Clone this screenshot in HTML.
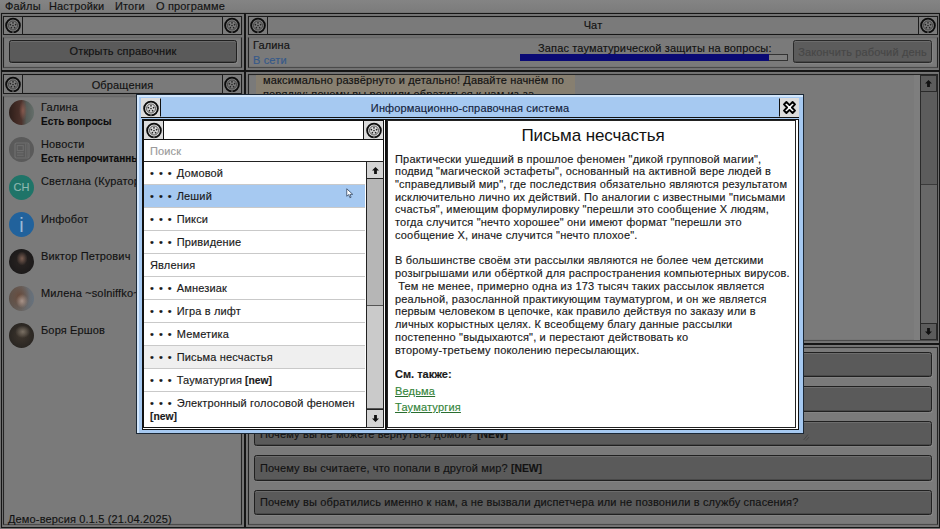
<!DOCTYPE html>
<html lang="ru">
<head>
<meta charset="utf-8">
<title>Информационно-справочная система</title>
<style>
*{box-sizing:border-box;margin:0;padding:0}
html,body{width:940px;height:529px;overflow:hidden}
body{background:#7a7a7a;font-family:"Liberation Sans",sans-serif;font-size:11px;letter-spacing:0.15px;color:#121212;position:relative;-webkit-text-stroke:0.15px}
.abs{position:absolute}
.t{position:absolute;white-space:nowrap;line-height:14px}
.box{position:absolute;border:1px solid #161616;box-shadow:0 0 1px rgba(0,0,0,.4),inset 0 0 1px rgba(0,0,0,.4)}
.ico{position:absolute;width:20px;height:19px;border:1px solid #1c1c1c;background:#7c7c7c}
.ico svg{position:absolute;left:0;top:0;width:18px;height:17px}
.lt{border-color:#6a6a6a #242424 #4a4a4a #242424}
.btn{position:absolute;background:#5a5a5a;border:1px solid #202020;border-radius:2.5px;box-shadow:inset 0 1px 0 #6c6c6c,inset 0 -1px 0 #484848,1px 1px 0 #848484}
.menu{position:absolute;left:0;top:0;width:940px;height:13px;background:linear-gradient(#848484,#7b7b7b)}
.menu span{position:absolute;top:-1px;line-height:14px;white-space:nowrap}
.av{position:absolute;left:9px;width:25px;height:25px;border-radius:50%;overflow:hidden}
.nm{position:absolute;left:41px;white-space:nowrap;line-height:14px}
.st{position:absolute;left:41px;white-space:nowrap;line-height:14px;font-weight:bold;color:#0c0c0c;transform:scaleX(.91);transform-origin:0 0;letter-spacing:0}
b{display:inline-block;transform:scaleX(.94);transform-origin:0 50%;letter-spacing:0}
/* modal */
#modal{position:absolute;left:136px;top:94px;width:668px;height:340px;background:#a6c9f1;border:1px solid #1b2836;box-shadow:inset 2px 2px 0 #d2e6fb}
#modal .ico{background:#dcdcdc;border-color:#111}
.row{position:absolute;left:0;width:221px;height:23px;border-bottom:1px solid #c9c9c9;line-height:22px;padding-left:6px;white-space:nowrap;color:#1a1a1a}
.row i{font-style:normal;word-spacing:0.9px;letter-spacing:0.55px}
.art{position:absolute;white-space:nowrap;font-size:11px;line-height:13px;color:#1a1a1a;letter-spacing:0.19px}
.art a{color:#34853a;text-decoration:underline;text-decoration-color:#2a6e30}
</style>
</head>
<body>
<!-- menu -->
<div class="menu">
<span style="left:5px">Файлы</span>
<span style="left:49px">Настройки</span>
<span style="left:115px">Итоги</span>
<span style="left:156px">О программе</span>
</div>

<!-- top-left panel -->
<div class="box" style="left:1px;top:13px;width:244px;height:58px"></div>
<div class="box" style="left:3px;top:16px;width:239px;height:19px"></div>
<div class="ico" style="left:3px;top:16px"><svg viewBox="0 0 18 17"><use href="#reel"/></svg></div>
<div class="ico" style="left:222px;top:16px"><svg viewBox="0 0 18 17"><use href="#reel"/></svg></div>
<div class="box lt" style="left:3px;top:37px;width:239px;height:31px"></div>
<div class="btn" style="left:9px;top:40px;width:228px;height:23px"></div>
<div class="t" style="left:9px;top:44px;width:228px;text-align:center">Открыть справочник</div>

<!-- contacts panel -->
<div class="box" style="left:1px;top:71px;width:244px;height:457px"></div>
<div class="box" style="left:3px;top:74px;width:239px;height:20px"></div>
<div class="ico" style="left:3px;top:74px;height:20px"><svg viewBox="0 0 18 17" style="top:0.5px"><use href="#reel"/></svg></div>
<div class="ico" style="left:222px;top:74px;height:20px"><svg viewBox="0 0 18 17" style="top:0.5px"><use href="#reel"/></svg></div>
<div class="t" style="left:3px;top:78px;width:239px;text-align:center">Обращения</div>
<div class="box lt" style="left:3px;top:96px;width:239px;height:429px"></div>

<div class="av" style="top:100px;background:radial-gradient(ellipse 16% 40% at 56% 42%,#86594e 0,rgba(134,89,78,0) 100%),linear-gradient(90deg,#2c1e1a 0%,#402923 28%,#4c322c 50%,#565c58 70%,#646e6a 100%)"></div>
<div class="nm" style="top:100px">Галина</div>
<div class="st" style="top:114px">Есть вопросы</div>

<div class="av" style="top:137px;background:#5a5a5a"></div>
<svg class="abs" style="left:14px;top:142px" width="16" height="17" viewBox="0 0 16 17"><g fill="none" stroke="#6f6f6f"><rect x="1" y="1" width="14" height="15" rx="1.5" stroke-width="1.2"/><path d="M11.6 1.5v14M13.2 2v13" stroke-width="0.8"/><rect x="3.2" y="3.6" width="6" height="5" stroke-width="1"/><path d="M3 10.8h6.6M3 13.2h6.6" stroke-width="1"/></g></svg>
<div class="nm" style="top:137px">Новости</div>
<div class="st" style="top:151px">Есть непрочитанные</div>

<div class="av" style="top:175px;background:#1f7468"></div>
<div class="t" style="left:9px;top:180px;width:25px;text-align:center;color:#8fb8b0;">СН</div>
<div class="nm" style="top:174px">Светлана (Куратор)</div>

<div class="av" style="top:212px;background:#21629c"></div>
<div class="t" style="left:9px;top:213px;width:25px;text-align:center;color:#9cbad6;font-size:20px;line-height:24px;-webkit-text-stroke:0">i</div>
<div class="nm" style="top:212px">Инфобот</div>

<div class="av" style="top:249px;background:radial-gradient(ellipse 22% 28% at 52% 38%,#7a5e52 0,rgba(122,94,82,0) 100%),radial-gradient(circle at 50% 50%,#2a2422 0,#1c1a1a 70%,#242020 100%)"></div>
<div class="nm" style="top:249px">Виктор Петрович</div>

<div class="av" style="top:286px;background:radial-gradient(ellipse 24% 28% at 52% 60%,#a8948a 0,rgba(168,148,138,0) 100%),radial-gradient(ellipse 42% 55% at 42% 42%,#66493a 0,rgba(102,73,58,0) 100%),linear-gradient(90deg,#5c5048 0,#6a6664 55%,#66727e 100%)"></div>
<div class="nm" style="top:286px">Милена ~solniffko~</div>

<div class="av" style="top:323px;background:radial-gradient(ellipse 30% 25% at 55% 35%,#7a7064 0,rgba(122,112,100,0) 100%),radial-gradient(circle at 50% 50%,#3e362e 0,#2a2622 70%,#34302c 100%)"></div>
<div class="nm" style="top:323px">Боря Ершов</div>

<div class="t" style="left:8px;top:512px;">Демо-версия 0.1.5 (21.04.2025)</div>

<!-- chat panel -->
<div class="box" style="left:245px;top:13px;width:695px;height:58px"></div>
<div class="box" style="left:248px;top:16px;width:690px;height:19px"></div>
<div class="ico" style="left:248px;top:16px"><svg viewBox="0 0 18 17"><use href="#reel"/></svg></div>
<div class="ico" style="left:918px;top:16px"><svg viewBox="0 0 18 17"><use href="#reel"/></svg></div>
<div class="t" style="left:248px;top:18px;width:690px;text-align:center">Чат</div>
<div class="box lt" style="left:248px;top:37px;width:690px;height:31px"></div>
<div class="t" style="left:253px;top:38px">Галина</div>
<div class="t" style="left:253px;top:53px;color:#35598a">В сети</div>
<div class="t" style="left:538px;top:41px;">Запас тауматурической защиты на вопросы:</div>
<div class="abs" style="left:520px;top:54px;width:268px;height:7px;border:1px solid #333;background:#808080"></div>
<div class="abs" style="left:520px;top:54px;width:249px;height:7px;background:#0a0a74"></div>
<div class="btn" style="left:793px;top:40px;width:139px;height:23px;background:#5c5c5c;border-color:#2a2a2a"></div>
<div class="t" style="left:794px;top:45px;width:137px;text-align:center;color:#474747">Закончить рабочий день</div>

<!-- chat area -->
<div class="box" style="left:245px;top:71px;width:695px;height:273px"></div>
<div class="box lt" style="left:248px;top:74px;width:690px;height:267px;border-top-color:#242424"></div>
<div class="abs" style="left:256px;top:75px;width:319px;height:20px;background:#877f70"></div>
<div class="t" style="left:263px;top:73px;">максимально развёрнуто и детально! Давайте начнём по</div>
<div class="t" style="left:263px;top:87px;">порядку: почему вы решили обратиться к нам из-за</div>
<!-- chat scrollbar -->
<div class="abs" style="left:914px;top:75px;width:6px;height:265px;background:#7e7e7e"></div>
<div class="abs" style="left:920px;top:75px;width:17px;height:265px;background:#5c5c5c;border-left:1px solid #2a2a2a"></div>
<div class="abs" style="left:921px;top:184px;width:16px;height:139px;background:#686868;border-top:1px solid #3a3a3a"></div>
<div class="abs" style="left:920px;top:75px;width:17px;height:17px;background:#5c5c5c;border:1px solid #2a2a2a"></div>
<svg class="abs" style="left:925px;top:80px" width="7" height="7" viewBox="0 0 9 9"><path d="M4.5 0L9 4.5H6.3V9H2.7V4.5H0z" fill="#111"/></svg>
<div class="abs" style="left:920px;top:323px;width:17px;height:17px;background:#5c5c5c;border:1px solid #2a2a2a"></div>
<svg class="abs" style="left:925px;top:328px" width="7" height="7" viewBox="0 0 9 9"><path d="M4.5 9L9 4.5H6.3V0H2.7V4.5H0z" fill="#111"/></svg>

<!-- questions panel -->
<div class="box" style="left:245px;top:344px;width:695px;height:184px"></div>
<div class="box lt" style="left:248px;top:347px;width:690px;height:178px;border-top-color:#2c2c2c"></div>
<div class="btn" style="left:254px;top:352px;width:678px;height:25px"></div>
<div class="btn" style="left:254px;top:386px;width:678px;height:26px"></div>
<div class="btn" style="left:254px;top:421px;width:678px;height:25px"></div>
<div class="t" style="left:260px;top:427px">Почему вы не можете вернуться домой? <b>[NEW]</b></div>
<div class="btn" style="left:254px;top:455px;width:678px;height:26px"></div>
<div class="t" style="left:260px;top:461px">Почему вы считаете, что попали в другой мир? <b>[NEW]</b></div>
<div class="btn" style="left:254px;top:490px;width:678px;height:25px"></div>
<div class="t" style="left:260px;top:495px">Почему вы обратились именно к нам, а не вызвали диспетчера или не позвонили в службу спасения?</div>

<!-- modal -->
<div id="modal">
  <div class="ico" style="left:4px;top:3px;height:19px;border-color:transparent #111 transparent transparent"><svg viewBox="0 0 18 17" style="top:0.5px"><use href="#reel"/></svg></div>
  <div class="t" style="left:0;top:6px;width:666px;text-align:center;color:#14233c">Информационно-справочная система</div>
  <div class="ico" style="left:642px;top:3px;width:20px;height:19px;border-color:transparent transparent transparent #111"></div>
  <svg class="abs" style="left:644px;top:4px" width="17" height="17" viewBox="0 0 17 17"><path d="M3 5.4L5.4 3L8.5 6.1L11.6 3L14 5.4L10.9 8.5L14 11.6L11.6 14L8.5 10.9L5.4 14L3 11.6L6.1 8.5Z" fill="#fff" stroke="#000" stroke-width="1.9" stroke-linejoin="round"/></svg>
  <div class="abs" style="left:4px;top:22px;width:658px;height:1px;background:#111"></div>

  <!-- left inner panel -->
  <div class="abs" style="left:5px;top:24px;width:244px;height:311px;background:#fff;border:1px solid #111"></div>
  <div class="abs" style="left:6px;top:25px;width:241px;height:308px;border:1px solid #111"></div>
  <div class="abs" style="left:6px;top:25px;width:241px;height:20px;border:1px solid #111;background:#fff"></div>
  <div class="ico" style="left:6px;top:25px;width:21px;height:20px"><svg viewBox="0 0 18 17" style="left:0.5px;top:0.5px"><use href="#reel"/></svg></div>
  <div class="ico" style="left:226px;top:25px;width:21px;height:20px"><svg viewBox="0 0 18 17" style="left:0.5px;top:0.5px"><use href="#reel"/></svg></div>
  <div class="abs" style="left:7px;top:45px;width:239px;height:22px;border-bottom:1px solid #222"></div>
  <div class="t" style="left:13px;top:49px;color:#9a9a9a">Поиск</div>
  <!-- list -->
  <div class="abs" style="left:7px;top:67px;width:223px;height:265px;overflow:hidden">
    <div class="row" style="top:0px"><i>• • • </i>Домовой</div>
    <div class="row" style="top:23px;background:#a6c9f1"><i>• • • </i>Леший</div>
    <div class="row" style="top:46px"><i>• • • </i>Пикси</div>
    <div class="row" style="top:69px"><i>• • • </i>Привидение</div>
    <div class="row" style="top:92px">Явления</div>
    <div class="row" style="top:115px"><i>• • • </i>Амнезиак</div>
    <div class="row" style="top:138px"><i>• • • </i>Игра в лифт</div>
    <div class="row" style="top:161px"><i>• • • </i>Меметика</div>
    <div class="row" style="top:184px;background:#efefef"><i>• • • </i>Письма несчастья</div>
    <div class="row" style="top:207px"><i>• • • </i>Тауматургия <b>[new]</b></div>
    <div class="row" style="top:230px;height:37px;line-height:13px;padding-top:5px;border-bottom:none"><i>• • • </i>Электронный голосовой феномен<br><b>[new]</b></div>
  </div>
  <!-- list scrollbar -->
  <div class="abs" style="left:229px;top:67px;width:18px;height:265px;background:#b6b6b6;border-left:1px solid #222;border-right:1px solid #222"></div>
  <div class="abs" style="left:229px;top:66px;width:18px;height:18px;background:#d4d4d4;border:1px solid #222"></div>
  <svg class="abs" style="left:235px;top:72px" width="7" height="7" viewBox="0 0 9 9"><path d="M4.5 0L9 4.5H6.3V9H2.7V4.5H0z" fill="#111"/></svg>
  <div class="abs" style="left:230px;top:210px;width:16px;height:104px;background:#cacaca;border-top:1px solid #555;border-bottom:1px solid #555"></div>
  <div class="abs" style="left:229px;top:314px;width:18px;height:19px;background:#d4d4d4;border:1px solid #222"></div>
  <svg class="abs" style="left:235px;top:320px" width="7" height="7" viewBox="0 0 9 9"><path d="M4.5 9L9 4.5H6.3V0H2.7V4.5H0z" fill="#111"/></svg>
  <!-- cursor -->
  <svg class="abs" style="left:208.5px;top:93px" width="7.5" height="10.5" viewBox="0 0 10 14"><path d="M1 1v10l2.5-2.2L5.2 13l1.6-.7L5.2 8.5H9z" fill="#fff" stroke="#4a607c" stroke-width="1.3"/></svg>

  <!-- right inner panel -->
  <div class="abs" style="left:249px;top:24px;width:413px;height:311px;background:#fff;border:1px solid #111"></div>
  <div class="abs" style="left:250px;top:25px;width:409px;height:308px;border:1px solid #222"></div>
  <div class="t" style="left:251px;top:31px;width:410px;text-align:center;font-size:17px;line-height:20px;color:#111;letter-spacing:-0.1px;-webkit-text-stroke:0">Письма несчастья</div>
  <div class="art" style="left:258px;top:57.5px;line-height:12.73px">Практически ушедший в прошлое феномен "дикой групповой магии",<br>подвид "магической эстафеты", основанный на активной вере людей в<br>"справедливый мир", где последствия обязательно являются результатом<br>исключительно лично их действий. По аналогии с известными "письмами<br>счастья", имеющим формулировку "перешли это сообщение X людям,<br>тогда случится "нечто хорошее" они имеют формат "перешли это<br>сообщение X, иначе случится "нечто плохое".<br><br>В большинстве своём эти рассылки являются не более чем детскими<br>розыгрышами или обёрткой для распространения компьютерных вирусов.<br>&nbsp;Тем не менее, примерно одна из 173 тысяч таких рассылок является<br>реальной, разосланной практикующим тауматургом, и он же является<br>первым человеком в цепочке, как правило действуя по заказу или в<br>личных корыстных целях. К всеобщему благу данные рассылки<br>постепенно "выдыхаются", и перестают действовать ко<br>второму-третьему поколению пересылающих.</div>
  <div class="art" style="left:258px;top:273px;font-weight:bold;letter-spacing:0">См. также:</div>
  <div class="art" style="left:258px;top:290px"><a>Ведьма</a></div>
  <div class="art" style="left:258px;top:306px"><a>Тауматургия</a></div>
</div>
<!-- resize grip -->
<svg class="abs" style="left:803px;top:434px" width="7" height="7" viewBox="0 0 7 7"><path d="M0.5 6L5 0.5M3 6.5L6 3" stroke="#444" stroke-width="0.8" fill="none"/></svg>

<svg width="0" height="0" style="position:absolute">
<defs>
<g id="reel">
<circle cx="9" cy="8.5" r="6.85" fill="none" stroke="#0c0c0c" stroke-width="1.9"/>
<circle cx="9" cy="8.5" r="4.5" fill="none" stroke="#363636" stroke-width="0.8"/>
<circle cx="9" cy="8.5" r="0.85" fill="#242424"/>
<circle cx="9.00" cy="5.80" r="0.85" fill="#242424"/>
<circle cx="11.57" cy="7.67" r="0.85" fill="#242424"/>
<circle cx="10.59" cy="10.68" r="0.85" fill="#242424"/>
<circle cx="7.41" cy="10.68" r="0.85" fill="#242424"/>
<circle cx="6.43" cy="7.67" r="0.85" fill="#242424"/>
<path d="M9 14.6V16.4" stroke="rgba(255,255,255,.5)" stroke-width="0.9"/>
</g>
</defs>
</svg>
</body>
</html>
